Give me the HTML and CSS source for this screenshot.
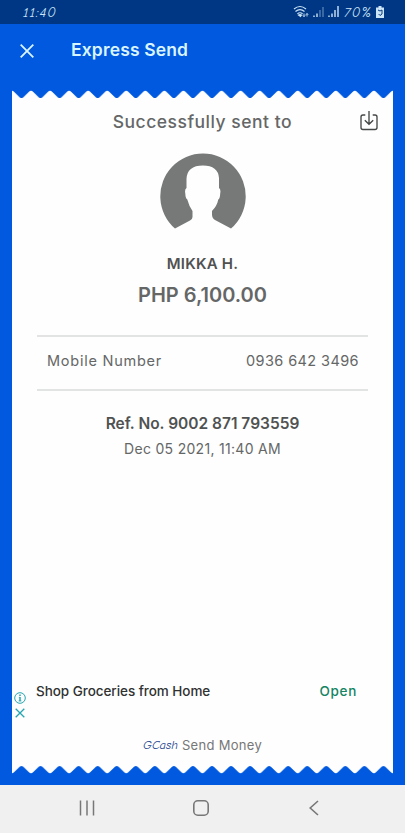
FILE: index.html
```html
<!DOCTYPE html>
<html lang="en">
<head>
<meta charset="utf-8">
<meta name="viewport" content="width=device-width, initial-scale=1">
<title>Express Send</title>
<link rel="stylesheet" href="styles.css">
</head>
<body>
<div class="status">
  <span class="clock">11:40</span>
  <div class="indicators">
    <svg class="wifi" width="17" height="14" viewBox="0 0 17 14" fill="none" stroke="currentColor" stroke-width="1.2"><path d="M1 4Q7 -1 13 4M2.5 6.5Q7 2.7 11.5 6.5M4.4 8.7Q7 6.8 9.6 8.7"/><path d="M5.5 10Q7 9 8.5 10L7.5 11.5Z" fill="currentColor"/><path d="M11 8.5v3M9.8 10.3L11 11.7l1.2-1.4M14 11.5V8.5M12.8 9.8L14 8.5 15.2 9.8" stroke-width=".9"/></svg>
    <svg class="bars" width="12" height="12" viewBox="0 0 12 12" stroke="currentColor" stroke-width="1.4"><path d="M1 11V9.5M4 11V7.5"/><path d="M7 11V4M10 11V1" opacity=".4"/></svg>
    <svg class="bars" width="12" height="12" viewBox="0 0 12 12" stroke="currentColor" stroke-width="1.4"><path d="M1 11V9.5M4 11V7.5M7 11V4M10 11V0"/></svg>
    <span class="percent">70%</span>
    <svg width="8" height="12" viewBox="0 0 8 12"><path fill="currentColor" d="M2.5 0h3v1.5H8V12H0V1.5h2.5Z"/><path d="M2 4l2 1 2-1v4L4 9.5 2.7 8" stroke="#043a83" fill="none"/></svg>
  </div>
</div>
<header class="header">
  <svg width="14" height="14" viewBox="0 0 14 14" fill="none" stroke="currentColor" stroke-width="1.8"><path d="M.7.7l12.6 12.6M13.3.7L.7 13.3"/></svg>
  <h1>Express Send</h1>
</header>
<main class="receipt">
  <svg class="edge" width="381" height="9" viewBox="0 0 381 9"><defs><pattern id="top" width="19.05" height="9" patternUnits="userSpaceOnUse"><path fill="#fefefe" d="M0 .8Q1 .8 2 1.8L7.6 7.2Q9.5 8.9 11.4 7.2L17 1.8Q18 .8 19.05 .8V9H0Z"/></pattern></defs><path fill="url(#top)" d="M0 0h381v9H0z"/></svg>
  <div class="paper">
    <div class="title-row">
      <h2>Successfully sent to</h2>
      <svg class="download" width="18" height="20" viewBox="0 0 18 20" fill="none" stroke="#454747" stroke-width="1.35"><path d="M5.3 4H3Q1 4 1 6v10.5q0 2 2 2h12q2 0 2-2V6q0-2-2-2h-2.3M9 0v13M4.8 9.2L9 13.3l4.2-4.1"/></svg>
    </div>
    <svg class="avatar" width="86" height="76" viewBox="0 0 86 76"><path fill="#777979" d="M15 75.5A42.7 42.7 0 1 1 71 75.5L55 67Q52 65 52 61.5V58Q57 53 58.3 46.5Q60 45.5 60.2 40.5Q61 36 59 35V25Q58 12.5 43 12.5Q27 12.5 26.5 26V35Q24.5 36 25.3 40.5Q25.5 45.5 27.3 46.5Q29 53 32.5 58V64Q32.5 66 30 67.5Z"/></svg>
    <div class="name"><span>MIKKA H.</span></div>
    <div class="amount"><span>PHP 6,100.00</span></div>
    <div class="details">
      <span class="label">Mobile Number</span>
      <span class="number">0936 642 3496</span>
    </div>
    <div class="ref"><span>Ref. No. 9002 871 793559</span></div>
    <div class="date"><span>Dec 05 2021, 11:40 AM</span></div>
    <div class="ad">
      <div class="choices">
        <svg width="12" height="12" viewBox="0 0 12 12" fill="none" stroke="currentColor"><circle cx="6" cy="6" r="5.3"/><path d="M6 5v4.2M6 2.6V4" stroke-width="1.5"/><path d="M4.8 5.3H6M4.5 8.9h3" stroke-width=".7"/></svg>
        <svg width="10" height="10" viewBox="0 0 10 10" fill="none" stroke="currentColor" stroke-width="1.3"><path d="M.7.7l8.6 8.6M9.3.7L.7 9.3"/></svg>
      </div>
      <span class="shop">Shop Groceries from Home</span>
      <span class="open">Open</span>
    </div>
    <div class="footer"><span class="brand">GCash</span><span class="service">Send Money</span></div>
  </div>
  <svg class="edge" width="381" height="9" viewBox="0 0 381 9"><defs><pattern id="bottom" width="19.05" height="9" patternUnits="userSpaceOnUse"><path fill="#fefefe" d="M0 0H19.05V8.2Q18 8.2 17 7.3L11.3 1.8Q9.5 0 7.7 1.8L2 7.3Q1 8.2 0 8.2Z"/></pattern></defs><path fill="url(#bottom)" d="M0 0h381v9H0z"/></svg>
</main>
<nav class="nav">
  <svg width="16" height="16" viewBox="0 0 16 16" stroke="currentColor" stroke-width="1.5"><path d="M1.5 .5v15M8 .5v15M14.5 .5v15"/></svg>
  <svg class="home" width="16" height="16" viewBox="0 0 16 16" fill="none" stroke="currentColor" stroke-width="1.6"><rect x=".8" y=".8" width="14.4" height="14.4" rx="4"/></svg>
  <svg class="back" width="10" height="16" viewBox="0 0 10 16" fill="none" stroke="currentColor" stroke-width="1.6"><path d="M9 1L1.2 8 9 15"/></svg>
</nav>
</body>
</html>
```
FILE: styles.css
```css
* { box-sizing: border-box; }
body { margin: 0; width: 405px; height: 833px; display: flex; flex-direction: column; background: #0059df; font-family: Inter, sans-serif; color: #656767; overflow: hidden; white-space: nowrap; }
svg { display: block; flex: none; }
h1, h2 { margin: 0; }
.status { height: 24px; background: #003784; color: #cbe4f7; display: flex; justify-content: space-between; padding: 0 21px 0 23px; align-items: center; }
.clock, .percent, .brand { font-family: "Comic Neue", cursive, Lato, sans-serif; font-style: italic; }
.clock { font-size: 14px; letter-spacing: 1px; }
.indicators { display: flex; align-items: center; height: 24px; }
.wifi { margin-right: 3px; }
.bars { margin-right: 3px; }
.percent { font-size: 14px; margin: 0 1px 0 1px; width: 31px; letter-spacing: 1px; }
.header { height: 66px; padding: 20px 20px 0; display: flex; align-items: flex-start; gap: 37px; color: #d9f5ff; }
h1 { font: 600 17.5px/20px Inter, sans-serif; margin-top: -4px; letter-spacing: .15px; }
.receipt { margin: 0 12px 11px; height: 684px; display: flex; flex-direction: column; }
.edge { height: 9px; }
.paper { height: 666px; background: #fefefe; display: flex; flex-direction: column; align-items: center; }
.title-row { width: 100%; height: 54px; display: flex; align-items: flex-start; justify-content: flex-end; padding: 12px 15px 0 0; }
h2 { flex: none; font: 500 17.5px/22px Inter, sans-serif; letter-spacing: .5px; margin-right: 68px; }
.avatar { height: 76px; }
.name { margin-top: 25px; font: 600 15px/20px Inter, sans-serif; height: 20px; color: #505252; letter-spacing: .2px; }
.amount { margin-top: 9px; font: 600 20px/24px Inter, sans-serif; height: 24px; }
.details { width: 331px; height: 56px; margin: 28px 0 0; border-top: 2px solid #e2e3e3; border-bottom: 2px solid #e2e3e3; display: flex; justify-content: space-between; align-items: flex-start; padding: 14px 9px 0 10px; font: 400 14.5px/20px Inter, sans-serif; letter-spacing: .4px; }
.label { letter-spacing: .75px; }
.ref { margin-top: 23px; font: 600 15.5px/20px Inter, sans-serif; color: #505252; }
.date { margin-top: 5px; font: 400 14px/20px Inter, sans-serif; letter-spacing: .3px; }
.ad { width: 381px; height: 36px; margin-top: 222px; display: flex; align-items: flex-start; color: #303232; font: 500 13.5px/20px Inter, sans-serif; }
.choices { width: 24px; padding: 11px 0 0 2px; color: #25a5b1; display: flex; flex-direction: column; gap: 4px; }
.choices svg + svg { margin-left: 1px; }
.shop { letter-spacing: -.05px; }
.open { margin-left: auto; margin-right: 36px; color: #148463; letter-spacing: .7px; }
.footer { margin-top: 18px; height: 20px; display: flex; align-items: center; gap: 4px; font: 400 13px/20px Inter, sans-serif; color: #777; }
.brand { color: #173d8c; font-weight: 500; font-size: 12.5px; }
.service { letter-spacing: .3px; }
.nav { height: 48px; background: #f0f0f0; color: #777; display: flex; align-items: center; padding: 0 0 3px 79px; }
.home { margin-left: 98px; }
.back { margin-left: 100px; }
```
